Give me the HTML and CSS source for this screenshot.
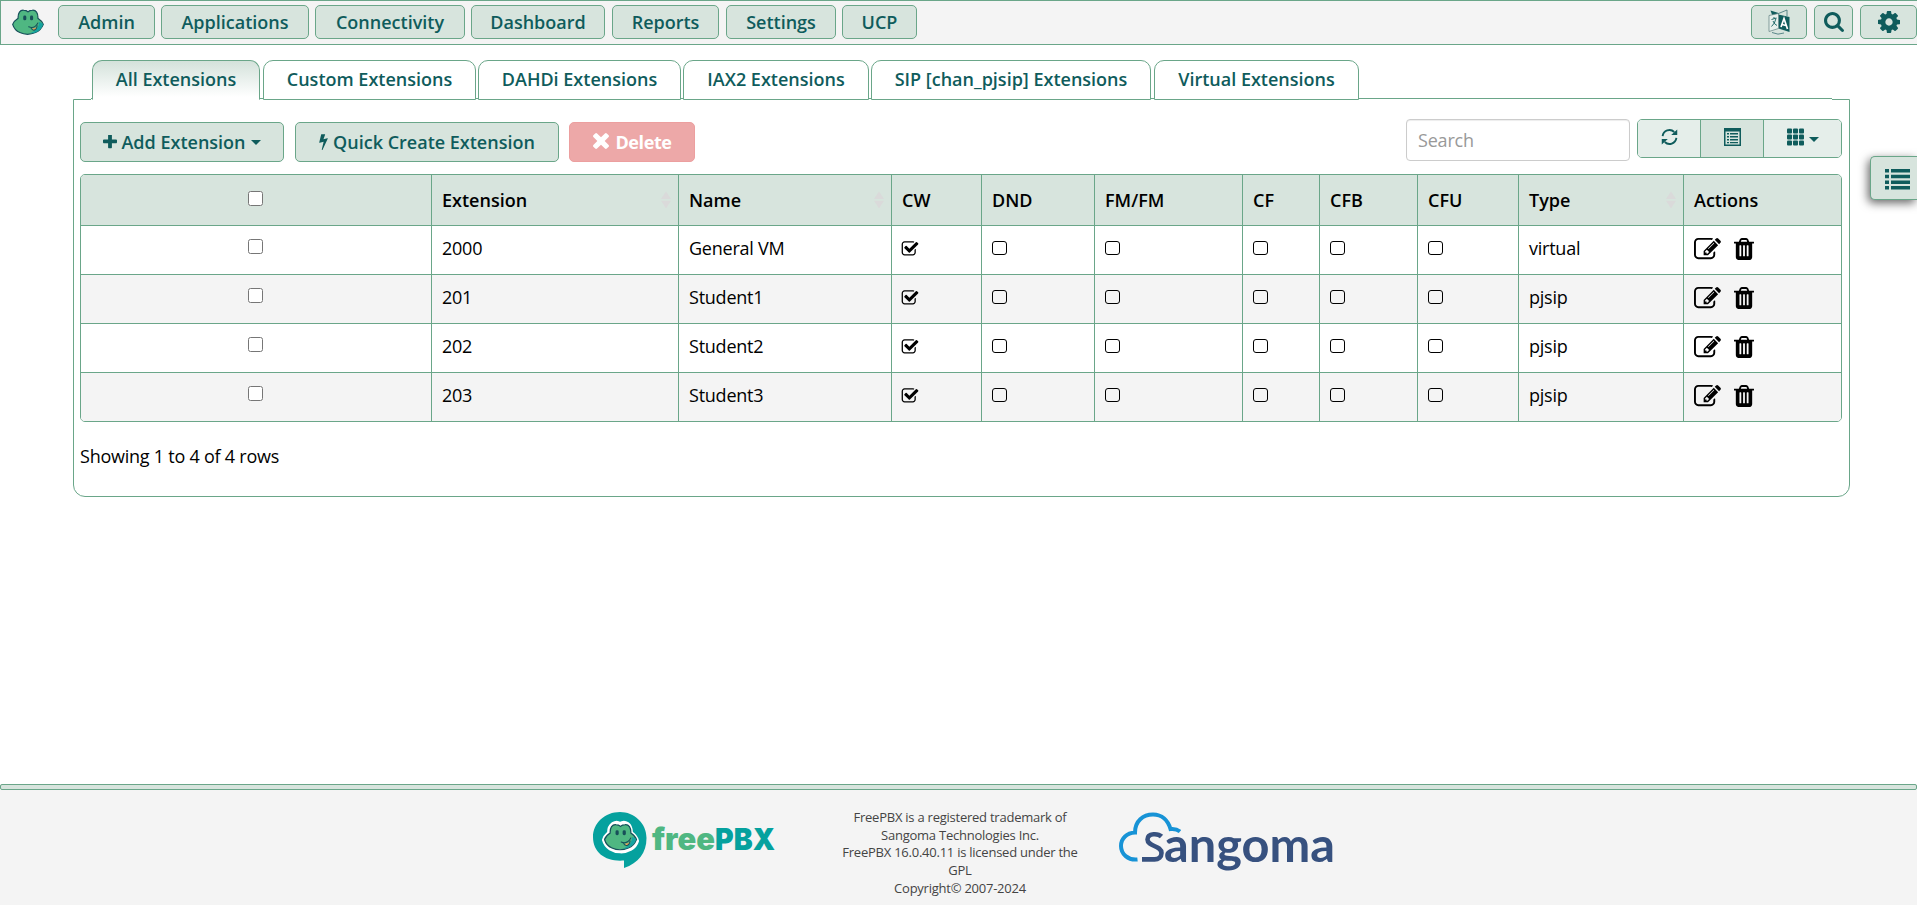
FILE: index.html
```html
<!DOCTYPE html>
<html lang="en">
<head>
<meta charset="utf-8">
<title>Extensions</title>
<link rel="stylesheet" href="styles.css">
</head>
<body>
<svg class="defs" width="0" height="0" aria-hidden="true">
  <symbol id="edit" viewBox="0 0 1792 1792"><path d="M888 1184l116-116-152-152-116 116v56h96v96h56zm440-720q-16-16-33 1l-350 350q-17 17-1 33t33-1l350-350q17-17 1-33zm80 594v190q0 119-84.500 203.500t-203.500 84.500h-832q-119 0-203.500-84.500t-84.500-203.500v-832q0-119 84.500-203.500t203.500-84.500h832q63 0 117 25 15 7 18 23 3 17-9 29l-49 49q-14 14-32 8-23-6-45-6h-832q-66 0-113 47t-47 113v832q0 66 47 113t113 47h832q66 0 113-47t47-113v-126q0-13 9-22l64-64q15-15 35-7t20 29zm-96-738l288 288-672 672h-288v-288zm444 132l-92 92-288-288 92-92q28-28 68-28t68 28l152 152q28 28 28 68t-28 68z"/></symbol>
  <symbol id="trash" viewBox="192 128 1408 1536"><path d="M704 1376v-704q0-14-9-23t-23-9h-64q-14 0-23 9t-9 23v704q0 14 9 23t23 9h64q14 0 23-9t9-23zm256 0v-704q0-14-9-23t-23-9h-64q-14 0-23 9t-9 23v704q0 14 9 23t23 9h64q14 0 23-9t9-23zm256 0v-704q0-14-9-23t-23-9h-64q-14 0-23 9t-9 23v704q0 14 9 23t23 9h64q14 0 23-9t9-23zm-544-992h448l-48-117q-7-9-17-11h-317q-10 2-17 11zm928 32v64q0 14-9 23t-23 9h-96v948q0 83-47 143.500t-113 60.500h-832q-66 0-113-58.500t-47-141.500v-952h-96q-14 0-23-9t-9-23v-64q0-14 9-23t23-9h309l70-167q15-37 54-63t79-26h320q40 0 79 26t54 63l70 167h309q14 0 23 9t9 23z"/></symbol>
  <symbol id="checked" viewBox="0 0 1792 1792"><path d="M1472 930v318q0 119-84.500 203.500t-203.500 84.500h-832q-119 0-203.500-84.500t-84.500-203.500v-832q0-119 84.500-203.500t203.500-84.500h832q63 0 117 25 15 7 18 23 3 17-9 29l-49 49q-10 10-23 10-3 0-9-2-23-6-45-6h-832q-66 0-113 47t-47 113v832q0 66 47 113t113 47h832q66 0 113-47t47-113v-254q0-13 9-22l64-64q10-10 23-10 6 0 12 3 20 8 20 29zm231-489l-814 814q-24 24-57 24t-57-24l-430-430q-24-24-24-57t24-57l110-110q24-24 57-24t57 24l263 263 647-647q24-24 57-24t57 24l110 110q24 24 24 57t-24 57z"/></symbol>
  <symbol id="plus" viewBox="192 192 1408 1408"><path d="M1600 736v192q0 40-28 68t-68 28h-416v416q0 40-28 68t-68 28h-192q-40 0-68-28t-28-68v-416h-416q-40 0-68-28t-28-68v-192q0-40 28-68t68-28h416v-416q0-40 28-68t68-28h192q40 0 68 28t28 68v416h416q40 0 68 28t28 68z"/></symbol>
  <symbol id="bolt" viewBox="448 0 896 1792"><path d="M1333 566q18 20 7 44l-540 1157q-13 25-42 25-4 0-14-2-17-5-25.500-19t-4.500-30l197-808-406 101q-4 1-12 1-18 0-31-11-18-15-13-39l201-825q4-14 16-23t28-9h328q19 0 32 12.500t13 29.500q0 8-5 18l-171 463 396-98q8-2 12-2 19 0 34 15z"/></symbol>
  <symbol id="times" viewBox="302 366 1188 1188"><path d="M1490 1322q0 40-28 68l-136 136q-28 28-68 28t-68-28l-294-294-294 294q-28 28-68 28t-68-28l-136-136q-28-28-28-68t28-68l294-294-294-294q-28-28-28-68t28-68l136-136q28-28 68-28t68 28l294 294 294-294q28-28 68-28t68 28l136 136q28 28 28 68t-28 68l-294 294 294 294q28 28 28 68z"/></symbol>
  <symbol id="search" viewBox="64 128 1664 1664"><path d="M1216 832q0-185-131.500-316.500t-316.500-131.500-316.500 131.500-131.500 316.500 131.500 316.500 316.500 131.500 316.500-131.500 131.500-316.500zm512 832q0 52-38 90t-90 38q-54 0-90-38l-343-342q-179 124-399 124-143 0-273.500-55.500t-225-150-150-225-55.500-273.500 55.500-273.500 150-225 225-150 273.500-55.500 273.500 55.500 225 150 150 225 55.500 273.500q0 220-124 399l343 343q37 37 37 90z"/></symbol>
  <symbol id="cog" viewBox="128 128 1536 1536"><path d="M1152 896q0-106-75-181t-181-75-181 75-75 181 75 181 181 75 181-75 75-181zm512-109v222q0 12-8 23t-20 13l-185 28q-19 54-39 91 35 50 107 138 10 12 10 25t-9 23q-27 37-99 108t-94 71q-12 0-26-9l-138-108q-44 23-91 38-16 136-29 186-7 28-36 28h-222q-14 0-24.500-8.500t-11.500-21.500l-28-184q-49-16-90-37l-141 107q-10 9-25 9-14 0-25-11-126-114-165-168-7-10-7-23 0-12 8-23 15-21 51-66.500t54-70.500q-27-50-41-99l-183-27q-13-2-21-12.500t-8-23.500v-222q0-12 8-23t19-13l186-28q14-46 39-92-40-57-107-138-10-12-10-24 0-10 9-23 26-36 98.500-107.500t94.500-71.500q13 0 26 10l138 107q44-23 91-38 16-136 29-186 7-28 36-28h222q14 0 24.500 8.500t11.500 21.500l28 184q49 16 90 37l142-107q9-9 24-9 13 0 25 10 129 119 165 170 7 8 7 22 0 12-8 23-15 21-51 66.500t-54 70.500q26 50 41 98l183 28q13 2 21 12.500t8 23.500z"/></symbol>
  <symbol id="refresh" viewBox="0 0 18 18"><path d="M1.700 8A7.300 7.300 0 0 1 14 3.700M16.300 10A7.300 7.300 0 0 1 4 14.300" fill="none" stroke="currentColor" stroke-width="2"/><path d="M17.200 1v6h-6.400zM.8 17v-6h6.400z"/></symbol>
  <symbol id="listalt" viewBox="0 0 17 18"><path d="M0 0h17v18H0zM1.500 3.500v13h14v-13z" fill-rule="evenodd"/><path d="M3 5h2v1.500H3zM6 5h8v1.500H6zM3 8h2v1.500H3zM6 8h8v1.500H6zM3 11h2v1.500H3zM6 11h8v1.500H6zM3 14h2v1.300H3zM6 14h8v1.300H6z"/></symbol>
  <symbol id="grid" viewBox="0 0 17 17"><g id="dots"><rect width="5" height="5" rx="1"/><rect x="6" width="5" height="5" rx="1"/><rect x="12" width="5" height="5" rx="1"/></g><use href="#dots" y="6"/><use href="#dots" y="12"/></symbol>
  <symbol id="frog" viewBox="0 0 94 76"><path d="M2 45C5 36 12 31 18 27 17 12 24 2 34 3c6 0 10 2 13 5C50 5 54 3 60 3c10-1 17 9 16 24 6 4 13 9 16 18-4 10-12 20-23 24-14 6-33 6-46 0C13 65 5 55 2 45Z" fill="#4fb782" stroke="#17505a" stroke-width="3.500"/><path d="M91 43c-5-2-8-5-12-5 2 12-8 27-26 33C73 73 90 57 91 43Z" fill="#15a39f"/><rect x="33" y="19" width="9" height="14" rx="4" fill="#174f59"/><rect x="53" y="19" width="9" height="14" rx="4" fill="#174f59"/><path d="M60 56c3 8 10 8 13-4-5 4-9 5-13 4Z" fill="#f79a50"/><path d="M49 52c9 4 20 2 27-11M56 56c4 8 15 10 18-7" fill="none" stroke="#17505a" stroke-width="3" stroke-linecap="round"/></symbol>
</svg>

<nav class="navbar">
  <svg class="brand"><use href="#frog"/></svg>
  <div class="menu">
    <a class="nb w-admin">Admin</a><a class="nb w-apps">Applications</a><a class="nb w-conn">Connectivity</a><a class="nb w-dash">Dashboard</a><a class="nb w-rep">Reports</a><a class="nb w-set">Settings</a><a class="nb w-ucp">UCP</a>
  </div>
  <div class="tools">
    <a class="nb w-lang"><svg class="i-lang" viewBox="0 0 22 26"><path d="M10.500 5.500 21.500 8v15l-11-3.500z"/><path d="M2.500 1.500l8 2.500v3h-6z"/><path d="M1 6.500l9.500-2v15L1 22.500z" fill="#e8f0ec" stroke="#5d7f80" stroke-width=".7"/><path d="M10.500 4.500 19 1v6M4 23.500q6 3 12 .5" fill="none" stroke="#3b7073" stroke-width=".8"/><path d="M3.500 10.500l5-1.500M6 8v1.500M8 9.500q-1 5-4.500 8M5 12q1 3 4 4.500" fill="none" stroke="currentColor" stroke-width=".9"/><path d="M13 18l3-8.500 3.500 10.500M14 15.500l4 1" fill="none" stroke="#fff" stroke-width="1.700"/></svg></a>
    <a class="nb w-search"><svg class="i-search"><use href="#search"/></svg></a>
    <a class="nb w-cog"><svg class="i-cog"><use href="#cog"/></svg></a>
  </div>
</nav>

<main class="page">
  <ul class="tabs">
    <li class="tab active t1">All Extensions</li><li class="tab t2">Custom Extensions</li><li class="tab t3">DAHDi Extensions</li><li class="tab t4">IAX2 Extensions</li><li class="tab t5">SIP [chan_pjsip] Extensions</li><li class="tab t6">Virtual Extensions</li>
  </ul>
  <section class="panel">
    <div class="toolbar">
      <div class="actions">
        <button class="btn b-add"><svg class="i-plus"><use href="#plus"/></svg><span>Add Extension</span><i class="caret"></i></button>
        <button class="btn b-quick"><svg class="i-bolt"><use href="#bolt"/></svg><span>Quick Create Extension</span></button>
        <button class="btn b-del"><svg class="i-times"><use href="#times"/></svg><span>Delete</span></button>
      </div>
      <div class="filters">
        <input class="search" type="text" placeholder="Search">
        <div class="group">
          <button class="gb"><svg class="i-g"><use href="#refresh"/></svg></button>
          <button class="gb on"><svg class="i-g"><use href="#listalt"/></svg></button>
          <button class="gb last"><svg class="i-g"><use href="#grid"/></svg><i class="caret"></i></button>
        </div>
      </div>
    </div>
    <div class="tablewrap">
      <table>
        <colgroup><col class="c1"><col class="c2"><col class="c3"><col class="c4"><col class="c5"><col class="c6"><col class="c7"><col class="c8"><col class="c9"><col class="c10"><col class="c11"></colgroup>
        <thead><tr><th class="sel"><input type="checkbox"></th><th class="sort">Extension</th><th class="sort">Name</th><th>CW</th><th>DND</th><th>FM/FM</th><th>CF</th><th>CFB</th><th>CFU</th><th class="sort">Type</th><th>Actions</th></tr></thead>
        <tbody>
          <tr><td class="sel"><input type="checkbox"></td><td>2000</td><td>General VM</td><td><svg class="i-check"><use href="#checked"/></svg></td><td><i class="box"></i></td><td><i class="box"></i></td><td><i class="box"></i></td><td><i class="box"></i></td><td><i class="box"></i></td><td>virtual</td><td><svg class="i-edit"><use href="#edit"/></svg><svg class="i-trash"><use href="#trash"/></svg></td></tr>
          <tr><td class="sel"><input type="checkbox"></td><td>201</td><td>Student1</td><td><svg class="i-check"><use href="#checked"/></svg></td><td><i class="box"></i></td><td><i class="box"></i></td><td><i class="box"></i></td><td><i class="box"></i></td><td><i class="box"></i></td><td>pjsip</td><td><svg class="i-edit"><use href="#edit"/></svg><svg class="i-trash"><use href="#trash"/></svg></td></tr>
          <tr><td class="sel"><input type="checkbox"></td><td>202</td><td>Student2</td><td><svg class="i-check"><use href="#checked"/></svg></td><td><i class="box"></i></td><td><i class="box"></i></td><td><i class="box"></i></td><td><i class="box"></i></td><td><i class="box"></i></td><td>pjsip</td><td><svg class="i-edit"><use href="#edit"/></svg><svg class="i-trash"><use href="#trash"/></svg></td></tr>
          <tr><td class="sel"><input type="checkbox"></td><td>203</td><td>Student3</td><td><svg class="i-check"><use href="#checked"/></svg></td><td><i class="box"></i></td><td><i class="box"></i></td><td><i class="box"></i></td><td><i class="box"></i></td><td><i class="box"></i></td><td>pjsip</td><td><svg class="i-edit"><use href="#edit"/></svg><svg class="i-trash"><use href="#trash"/></svg></td></tr>
        </tbody>
      </table>
    </div>
    <p class="info">Showing 1 to 4 of 4 rows</p>
  </section>
</main>

<aside class="drawer"><svg class="i-list" viewBox="0 0 25 21"><path d="M0 0h4v3.500H0zM6 0h19v3.500H6zM0 5.700h4v3.500H0zM6 5.700h19v3.500H6zM0 11.400h4v3.500H0zM6 11.400h19v3.500H6zM0 17.100h4v3.500H0zM6 17.100h19v3.500H6z"/></svg></aside>

<footer class="footer">
  <div class="strip"></div>
  <div class="foot">
    <svg class="logo-pbx" viewBox="0 0 184 58">
      <path d="M27 1C41 1 53.500 12 53.500 27c0 15-8 25-22.500 30v-7.500C13 51 0 42 0 26 0 12 12 1 27 1Z" fill="#05a19e"/>
      <path d="M11 29c1-4 4-6 5-7 0-9 7-12 11-9 5-3 11 0 11 9 3 2 5 4 6 8-4 14-29 14-33-1Z" fill="#fff" stroke="#fff" stroke-width="4"/>
      <use href="#frog" x="10.500" y="12.500" width="34" height="27"/>
      <text x="59" y="38.500" textLength="63" lengthAdjust="spacingAndGlyphs" class="lt green">free</text>
      <text x="122" y="38.500" textLength="60" lengthAdjust="spacingAndGlyphs" class="lt teal">PBX</text>
    </svg>
    <div class="legal">FreePBX is a registered trademark of<br>Sangoma Technologies Inc.<br>FreePBX 16.0.40.11 is licensed under the<br>GPL<br>Copyright© 2007-2024</div>
    <svg class="logo-san" viewBox="0 0 216 64">
      <path d="M18.500 48.500C9 49.500 2 43 2 35c0-8 6-13 14-13.500C16 10 24 3.500 34 3.500c9 0 15 6 17.500 14.500 4-.5 7 .5 9.500 2.500" fill="none" stroke="#1793d6" stroke-width="4"/>
      <path d="M42.500 25.500c-3-3-14-4-14 3 0 7 14 6 14 13.500 0 4-3 6.400-7 6.400H23" fill="none" stroke="#37517f" stroke-width="4.600"/>
      <text x="45" y="50.500" textLength="171" lengthAdjust="spacingAndGlyphs" class="st">angoma</text>
    </svg>
  </div>
</footer>
</body>
</html>
```
FILE: styles.css
```css
* { box-sizing: border-box; }
body { margin: 0; height: 905px; display: flex; flex-direction: column; overflow: hidden; background: #fff; color: #000; font-family: "Open Sans", sans-serif; font-size: 18px; line-height: 1.4; }
svg { fill: currentColor; flex: none; }
.defs { position: absolute; }

.navbar { height: 45px; flex: none; display: flex; align-items: center; background: #f4f4f4; border: 1px solid #6aa689; border-right: 0; padding-bottom: 1px; }
.brand { width: 32px; height: 26px; margin-left: 11px; }
.menu { display: flex; margin-left: 14px; }
.menu .nb { padding-top: 2px; }
.tools { display: flex; gap: 7px; margin-left: auto; }
.nb { height: 34px; display: flex; align-items: center; justify-content: center; background: #d7e4dd; border: 1px solid #6aa689; border-radius: 5px; color: #0f5c5c; font-weight: 600; }
.w-admin { width: 97px; margin-right: 6px; }
.w-apps { width: 148px; margin-right: 6px; }
.w-conn { width: 150px; margin-right: 6px; }
.w-dash { width: 134px; margin-right: 7px; }
.w-rep { width: 107px; margin-right: 7px; }
.w-set { width: 110px; margin-right: 6px; }
.w-ucp { width: 75px; }
.w-lang { width: 56px; }
.w-search { width: 39px; }
.w-cog { width: 57px; }
.i-lang { width: 22px; height: 26px; }
.i-search { width: 20px; height: 20px; }
.i-cog { width: 22px; height: 22px; }

.page { width: 1777px; margin: 15px 0 0 73px; }
.tabs { display: flex; list-style: none; margin: 0 18px; padding: 0 0 0 1px; height: 39px; position: relative; z-index: 1; border-bottom: 1px solid #6aa689; box-shadow: 0 1px #fff; }
.tab { height: 40px; border: 1px solid #6aa689; border-radius: 10px 10px 0 0; background: #fff; color: #0f5c5c; font-weight: 600; text-align: center; line-height: 37px; white-space: nowrap; }
.tab.active { background: linear-gradient(#d4e2db, #fff 95%); border-bottom-color: #fff; }
.t1 { width: 168px; margin-right: 3px; }
.t2 { width: 213px; margin-right: 2px; }
.t3 { width: 203px; margin-right: 2px; }
.t4 { width: 186px; margin-right: 2px; }
.t5 { width: 280px; margin-right: 3px; }
.t6 { width: 205px; }
.panel { height: 398px; border: 1px solid #6aa689; border-radius: 0 0 12px 12px; padding: 19px 7px 0 6px; }
.toolbar { display: flex; justify-content: space-between; height: 55px; }
.actions { display: flex; padding-top: 3px; }
.btn { height: 40px; display: flex; align-items: center; justify-content: center; padding: 0 0 1px; background: #d7e4dd; border: 1px solid #6aa689; border-radius: 5px; color: #0f5c5c; font: 600 18px "Open Sans", sans-serif; }
.b-add { width: 204px; margin-right: 11px; }
.b-quick { width: 264px; margin-right: 10px; }
.b-del { width: 126px; background: #eda8a8; border-color: #ec9f9f; color: #fff; font-weight: 700; letter-spacing: -.4px; }
.i-plus { width: 14px; height: 14px; margin-right: 4px; }
.i-bolt { width: 9px; height: 17px; margin-right: 5px; }
.i-times { width: 16px; height: 16px; margin: 0 6px 2px 1px; }
.caret { width: 0; height: 0; border: 5px solid transparent; border-top-color: currentColor; border-bottom: 0; margin: 2px 0 0 5px; }
.filters { display: flex; gap: 7px; align-items: flex-start; }
.search { width: 224px; height: 42px; border: 1px solid #ccc; border-radius: 4px; padding: 0 11px; box-shadow: inset 0 1px 1px rgba(0,0,0,.075); font: 18px "Open Sans", sans-serif; letter-spacing: -.2px; }
.search::placeholder { color: #999; }
.group { display: flex; height: 39px; width: 205px; border: 1px solid #6aa689; border-radius: 5px; overflow: hidden; }
.gb { width: 63px; border: 0; border-right: 1px solid #6aa689; background: #e5eeea; color: #0f5c5c; display: flex; align-items: center; justify-content: center; padding: 0 0 3px 1px; }
.gb.on { background: #d7e4dd; }
.gb.last { width: 77px; border-right: 0; }
.gb.last .caret { margin: 5px 0 0 5px; }
.i-g { width: 17px; height: 18px; }

.tablewrap { width: 1762px; border: 1px solid #6aa689; border-radius: 5px; overflow: hidden; }
table { width: 1760px; table-layout: fixed; border-collapse: separate; border-spacing: 0; }
th, td { padding: 0 10px; text-align: left; white-space: nowrap; border-right: 1px solid #6aa689; }
th:last-child, td:last-child { border-right: 0; }
th { height: 51px; background: #d7e4dd; font-weight: 600; border-bottom: 1px solid #6aa689; padding-top: 2px; }
td { height: 49px; border-bottom: 1px solid #6aa689; padding-bottom: 2px; letter-spacing: -.24px; }
tr:last-child td { height: 48px; border-bottom: 0; }
tbody tr:nth-child(even) { background: #f4f4f4; }
.c1 { width: 351px; } .c2 { width: 247px; } .c3 { width: 213px; } .c4 { width: 90px; } .c5 { width: 113px; } .c6 { width: 148px; } .c7 { width: 77px; } .c8 { width: 98px; } .c9 { width: 101px; } .c10 { width: 165px; } .c11 { width: 157px; }
.sel { text-align: center; line-height: 0; padding: 0 11px 5px 9px; }
td.sel { padding-bottom: 7px; }
th.sel { padding-bottom: 3px; }
.sel input { width: 15px; height: 15px; margin: 0; vertical-align: middle; }
.sort::after { content: ""; float: right; width: 10px; height: 17px; margin: 3px -3px 0 0; background: #dadada; clip-path: polygon(50% 0, 100% 45%, 0 45%, 0 55%, 100% 55%, 50% 100%, 0 55%, 0 45%); }
.box { display: block; width: 15px; height: 14px; border: 1.500px solid #000; border-radius: 3px; margin: 0 0 2px -.5px; }
.i-check { display: block; width: 18px; height: 18px; margin: 0 0 1px -1px; }
.i-edit { width: 27px; height: 27px; vertical-align: middle; }
.i-trash { width: 20px; height: 22px; vertical-align: middle; margin-left: 13px; }
.info { margin: 22px 0 0; letter-spacing: -.24px; }

.drawer { position: absolute; right: 0; top: 156px; width: 47px; height: 44px; background: #d7e4dd; border: 1px solid #6aa689; border-right: 0; border-radius: 5px 0 0 5px; box-shadow: -2px 3px 10px rgba(0,0,0,.6); color: #0f5c5c; padding: 12px 0 0 14px; }
.i-list { display: block; width: 25px; height: 21px; }

.footer { margin-top: auto; height: 121px; background: #f4f4f4; }
.strip { height: 6px; background: #d7e4dd; border: 1px solid #6aa689; border-radius: 2px; }
.foot { display: flex; padding: 21px 0 0 593px; align-items: flex-start; }
.logo-pbx { width: 184px; height: 58px; }
.legal { width: 240px; margin: -2px 39px 0 63px; text-align: center; font-size: 13px; line-height: 17.700px; letter-spacing: -.24px; color: #444; white-space: nowrap; }
.logo-san { width: 216px; height: 64px; }
.lt { font: 900 30px Inter, sans-serif; }
.green { fill: #4fb782; }
.teal { fill: #05a19e; }
.st { font: 700 48px Lato, sans-serif; fill: #37517f; }
```
